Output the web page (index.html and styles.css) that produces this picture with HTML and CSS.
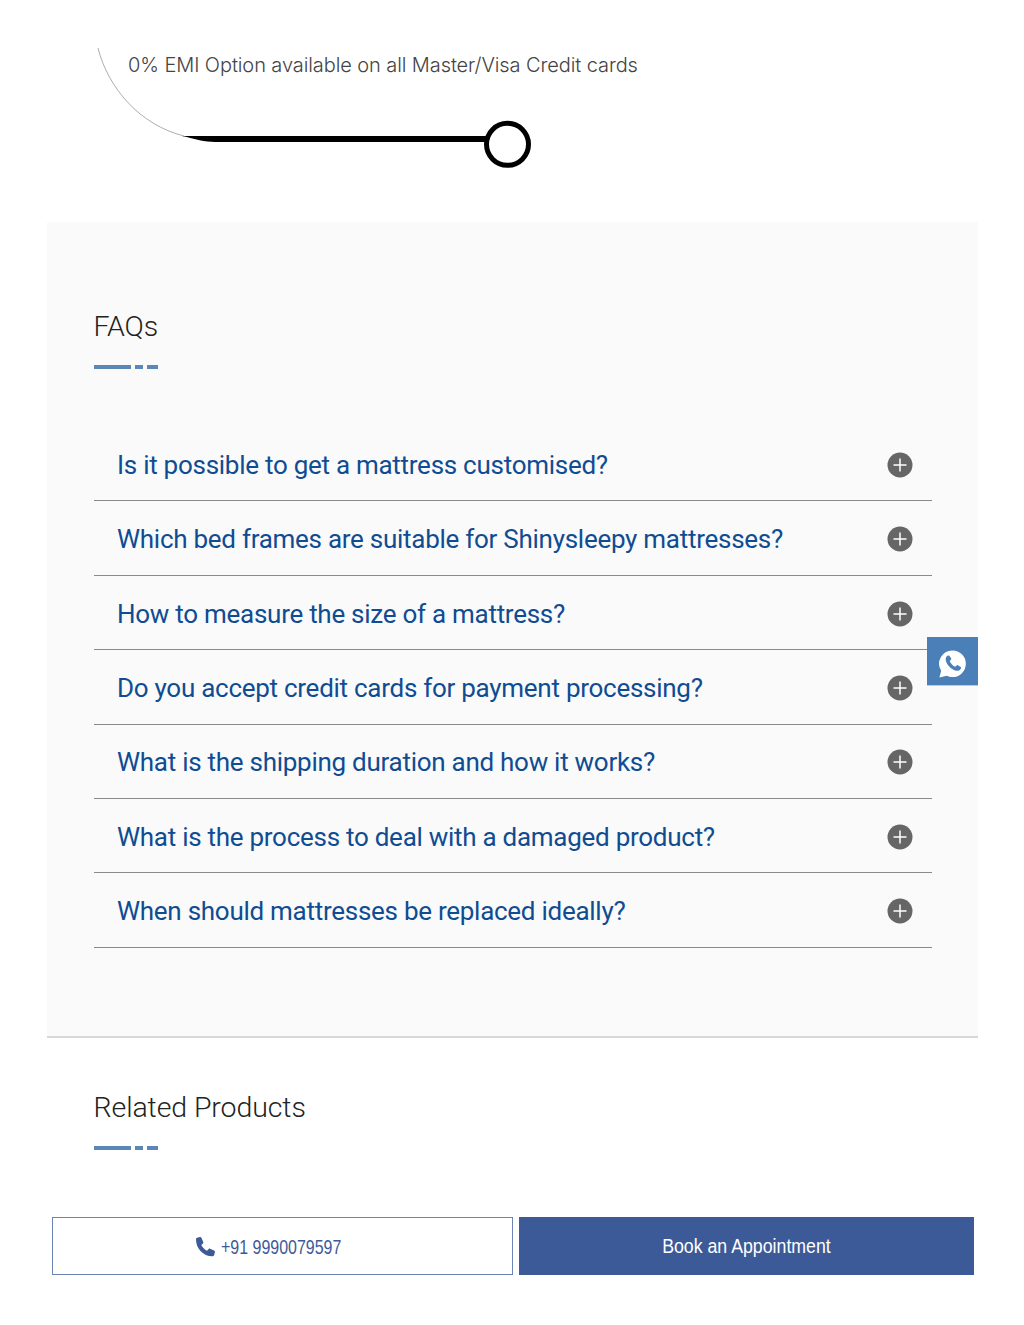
FILE: index.html
```html
<!DOCTYPE html>
<html lang="en">
<head>
<meta charset="utf-8">
<title>FAQs</title>
<link rel="stylesheet" href="styles.css">
</head>
<body>
<section class="emi">
  <svg class="emi-line" width="600" height="222" viewBox="0 0 600 222" aria-hidden="true">
    <path class="emi-thin" d="M98 48C108 88 140 125 184 136"/>
    <path d="M182 136L487 136L487 142L215 142C205 142 195 139 182 136Z"/>
    <circle class="emi-ring" cx="507.500" cy="144.300" r="21"/>
  </svg>
  <p class="emi-text">0% EMI Option available on all Master/Visa Credit cards</p>
</section>

<section class="faq-panel">
  <h2 class="heading">FAQs</h2>
  <div class="rule"><span class="rule-long"></span><span class="rule-mid"></span><span class="rule-short"></span></div>
  <ul class="faq-list">
    <li class="faq-item"><span>Is it possible to get a mattress customised?</span><svg class="plus" viewBox="0 0 26 26"><circle cx="13" cy="13" r="12.500"/><path d="M13 6.500V19.500M6.500 13H19.500"/></svg></li>
    <li class="faq-item"><span>Which bed frames are suitable for Shinysleepy mattresses?</span><svg class="plus" viewBox="0 0 26 26"><circle cx="13" cy="13" r="12.500"/><path d="M13 6.500V19.500M6.500 13H19.500"/></svg></li>
    <li class="faq-item"><span>How to measure the size of a mattress?</span><svg class="plus" viewBox="0 0 26 26"><circle cx="13" cy="13" r="12.500"/><path d="M13 6.500V19.500M6.500 13H19.500"/></svg></li>
    <li class="faq-item"><span>Do you accept credit cards for payment processing?</span><svg class="plus" viewBox="0 0 26 26"><circle cx="13" cy="13" r="12.500"/><path d="M13 6.500V19.500M6.500 13H19.500"/></svg></li>
    <li class="faq-item"><span>What is the shipping duration and how it works?</span><svg class="plus" viewBox="0 0 26 26"><circle cx="13" cy="13" r="12.500"/><path d="M13 6.500V19.500M6.500 13H19.500"/></svg></li>
    <li class="faq-item"><span>What is the process to deal with a damaged product?</span><svg class="plus" viewBox="0 0 26 26"><circle cx="13" cy="13" r="12.500"/><path d="M13 6.500V19.500M6.500 13H19.500"/></svg></li>
    <li class="faq-item"><span>When should mattresses be replaced ideally?</span><svg class="plus" viewBox="0 0 26 26"><circle cx="13" cy="13" r="12.500"/><path d="M13 6.500V19.500M6.500 13H19.500"/></svg></li>
  </ul>
</section>

<section class="related">
  <h2 class="heading">Related Products</h2>
  <div class="rule"><span class="rule-long"></span><span class="rule-mid"></span><span class="rule-short"></span></div>
</section>

<div class="cta-bar">
  <a class="cta cta-call" href="#"><svg class="call-icon" viewBox="0 0 20 20"><path d="M1 2.200C1 1.500 1.400 1 2 .8L5 .1C5.700 0 6.200 .3 6.500 .9L8.300 5C8.500 5.500 8.400 6 8 6.400L6.300 8C7.500 10.500 9.500 12.500 12 13.800L13.700 12C14.100 11.600 14.600 11.500 15.100 11.700L19 13.500C19.600 13.800 20 14.300 19.900 15L19.200 18.100C19 18.800 18.500 19.200 17.800 19.200C8.500 19.500 1 11.800 1 2.200Z"/></svg><span class="cta-label cta-label-call">+91 9990079597</span></a>
  <a class="cta cta-book" href="#"><span class="cta-label cta-label-book">Book an Appointment</span></a>
</div>

<a class="whatsapp" href="#" aria-label="WhatsApp">
  <svg viewBox="0 0 32 32" width="31" height="31"><path class="wa-bubble" d="M16 2.500A13.700 13.700 0 0 1 16 30C13.800 30 11.800 29.500 10 28.600L2.500 30.500L4.300 23.500A13.700 13.700 0 0 1 16 2.500Z"/><path class="wa-phone" d="M11.500 7.800C10 8.400 8.700 10 9 12.300C9.700 17 15 22.500 19.800 23.400C22 23.800 24 22.700 24.800 20.800C25 20.300 24.900 20 24.500 19.700L21.500 17.800C21 17.500 20.700 17.600 20.300 18L19 19.400C16.500 18.400 14 15.700 13.100 13.300L14.400 12C14.800 11.600 14.900 11.200 14.600 10.700L12.700 8C12.400 7.600 12 7.600 11.500 7.800Z"/></svg>
</a>
</body>
</html>
```

FILE: styles.css
```css
* { box-sizing: border-box; }
html, body { margin: 0; padding: 0; }
body {
  position: relative;
  height: 1325px;
  overflow: hidden;
  background: #fff;
  font-family: "Roboto", "Lato", sans-serif;
}
.emi { position: relative; height: 222px; }
.emi-line { display: block; }
.emi-thin { fill: none; stroke: #8a8a8a; stroke-width: 0.7; }
.emi-ring { fill: #fff; stroke: #000; stroke-width: 5; }
.emi-text {
  position: absolute;
  left: 128px;
  top: 52px;
  margin: 0;
  font-family: "Inter", sans-serif;
  font-weight: 300;
  font-size: 20px;
  letter-spacing: -0.09px;
  line-height: 27px;
  color: #444;
}
.faq-panel {
  margin: 0 46px 0 47px;
  padding: 85px 46.500px 87.900px;
  background: #fafafa;
  border-bottom: 2px solid #d8d8d8;
}
.heading {
  margin: 0;
  font-weight: 300;
  font-size: 28.500px;
  letter-spacing: -0.1px;
  line-height: 40px;
  color: #222;
}
.rule { display: flex; gap: 4px; margin-top: 18px; height: 4px; }
.rule-long { width: 37px; background: #5a86b8; }
.rule-mid { width: 8px; background: #5a86b8; }
.rule-short { width: 11.500px; background: #5a86b8; }
.faq-list { list-style: none; margin: 58.100px 0 0; padding: 0; width: 838.500px; }
.faq-item {
  display: flex;
  align-items: center;
  justify-content: space-between;
  height: 74.4px;
  padding: 5px 19px 3px 23.500px;
  border-bottom: 1.500px solid #8a8a8a;
  font-size: 26px;
  font-weight: 400;
  letter-spacing: -0.27px;
  color: #0f4c92;
}
.plus { width: 26px; height: 26px; flex: none; }
.plus circle { fill: #666; }
.plus path { fill: none; stroke: #fff; stroke-width: 1.500; }
.related { padding: 50px 0 0 93.500px; }
.cta-bar {
  display: flex;
  gap: 6px;
  height: 58px;
  margin: 67px 0 0 52px;
}
.cta {
  display: flex;
  align-items: center;
  justify-content: center;
  font-family: "Liberation Sans", sans-serif;
  font-size: 20.500px;
  text-decoration: none;
}
.cta-label { display: inline-block; }
.cta-label-call { width: 120px; white-space: nowrap; font-size: 21px; transform: scaleX(0.76); transform-origin: left center; padding-top: 3px; }
.cta-label-book { transform: scaleX(0.865); }
.cta-call {
  width: 461px;
  gap: 6px;
  padding-right: 29px;
  background: #fff;
  border: 1.500px solid #6a84b4;
  color: #3d5a98;
}
.cta-book {
  width: 455px;
  background: #3d5a98;
  color: #fff;
}
.call-icon { width: 20px; height: 20px; fill: #3d5a98; margin-top: 3px; }
.whatsapp {
  position: absolute;
  left: 927px;
  top: 637px;
  width: 51px;
  height: 49px;
  display: flex;
  align-items: center;
  justify-content: center;
  padding-top: 4px;
  background: #4a7fb8;
  border-bottom: 1px solid #b5cde4;
}
.wa-bubble { fill: #fff; }
.wa-phone { fill: #4a7fb8; }
```
